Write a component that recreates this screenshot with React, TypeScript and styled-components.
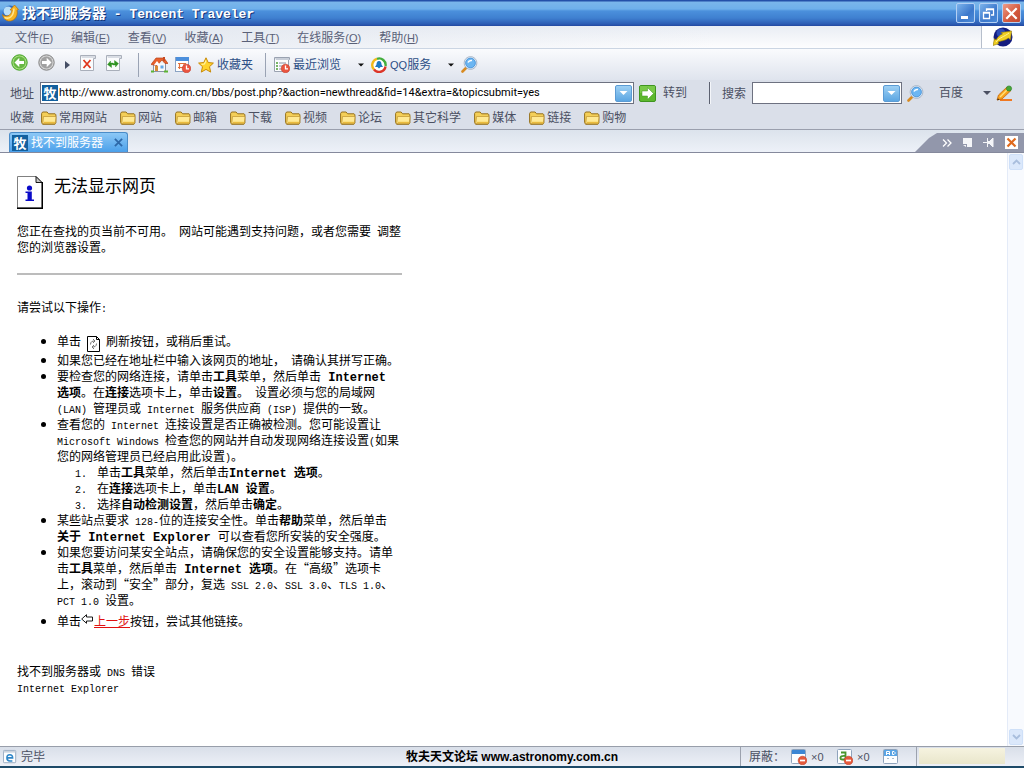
import React from "react";
import styled, { createGlobalStyle, css } from "styled-components";

const CJK = `"Noto Sans CJK SC"`;
const UI_FONT = `"Liberation Sans", ${CJK}, sans-serif`;
const DOC_FONT = `${CJK}, "Liberation Mono", sans-serif`;

const GlobalStyle = createGlobalStyle`
  *, *::before, *::after { box-sizing: border-box; }
  body { margin: 0; background: #fff; font-family: ${UI_FONT}; font-size: 12px; line-height: 16px; color: #4b5062; }
  button, input { font: inherit; color: inherit; }
  button { border: 0; padding: 0; background: none; white-space: nowrap; }
  svg { display: block; flex: none; }
`;

const Window = styled.div`
  min-height: 100vh;
  display: flex;
  flex-direction: column;
`;

const Small = styled.span`
  font-size: 11px;
  line-height: 12px;
`;

/* ---------- title bar ---------- */
const TitleBar = styled.header`
  display: flex;
  align-items: center;
  gap: 3px;
  height: 26px;
  padding: 0 3px 0 2px;
  background: linear-gradient(#2450a8 0, #2450a8 1px, #7ab6ea 2px, #6fb0ea 9px, #4b90dc 11px, #3f80d0 18px, #2c5cb4 24px, #2348a0 26px);
`;

const Title = styled.h1`
  flex: 1;
  margin: 0;
  color: #fff;
  font: bold 14px/20px ${CJK}, sans-serif;
  text-shadow: 1px 1px 0 #143478;
`;

const TitleLatin = styled.span`
  font: bold 13px/20px "Liberation Mono", monospace;
  white-space: pre;
`;

const WindowButtons = styled.div`
  display: flex;
  gap: 4px;
`;

const WindowButton = styled.button<{ $close?: boolean }>`
  width: 19px;
  height: 20px;
  display: grid;
  place-items: center;
  border: 1px solid #b4d0f4;
  border-radius: 2px;
  background: ${(p) =>
    p.$close ? "linear-gradient(135deg, #ee9c88, #d2573c 60%, #c04a34)" : "linear-gradient(135deg, #7cb4ec, #3c78cc 60%, #4a8ad8)"};
`;

/* ---------- menu ---------- */
const MenuBar = styled.nav`
  display: flex;
  height: 23px;
  border-bottom: 1px solid #cbd5e3;
  background: linear-gradient(90deg, #e3e8f0 0, rgba(255, 255, 255, 0) 70%), linear-gradient(#e9edf4, #fdfdfe);
`;

const MenuItems = styled.div`
  flex: 1;
  display: flex;
  align-items: center;
  gap: 18px;
  padding: 1px 0 0 15px;
`;

const MenuItem = styled.button`
  color: #5a6178;
`;

const Throbber = styled.div`
  width: 43px;
  display: grid;
  place-items: center;
  border-left: 1px solid #b7bfcc;
  background: #fff;
`;

/* ---------- toolbars ---------- */
const ToolBar = styled.div`
  display: flex;
  align-items: center;
  height: 31px;
  padding-left: 11px;
  background: linear-gradient(#fafbfd, #dfe4ee);
`;

const NavGroup = styled.div`
  display: flex;
  align-items: center;
  gap: 10px;
  padding-bottom: 4px;
`;

const ToolGroup = styled.div<{ $gap: number }>`
  display: flex;
  align-items: center;
  gap: ${(p) => p.$gap}px;
`;

const ToolButton = styled.button`
  display: flex;
  align-items: center;
  gap: 3px;
  color: #2d4f86;
`;

const Separator = styled.span<{ $before: number; $after: number }>`
  width: 1px;
  height: 24px;
  margin: 0 ${(p) => p.$after}px 0 ${(p) => p.$before}px;
  background: #9aa3b4;
`;

const AddressBar = styled.form`
  display: flex;
  align-items: center;
  height: 26px;
  padding: 0 11px 0 10px;
  background: #dadfe9;
`;

const BarLabel = styled.label`
  width: 30px;
  padding-top: 1px;
  white-space: nowrap;
`;

const Field = styled.div<{ $width?: number }>`
  ${(p) => (p.$width ? css`width: ${p.$width}px;` : css`flex: 1; min-width: 0;`)}
  display: flex;
  align-items: center;
  height: 22px;
  padding: 0 1px;
  border: 1px solid #6d7180;
  background: #fff;
`;

const FieldInput = styled.input`
  flex: 1;
  min-width: 0;
  padding: 0 0 0 1px;
  border: 0;
  outline: 0;
  background: none;
  color: #000;
  font: 11px/16px Roboto, sans-serif;
`;

const DropButton = styled.button`
  width: 17px;
  height: 17px;
  display: grid;
  place-items: center;
  border: 1px solid #5b9bd4;
  border-radius: 2px;
  background: linear-gradient(#9ed0f4, #5ba6e2);
`;

const GoButton = styled.button`
  display: flex;
  align-items: center;
  gap: 7px;
  margin-left: 5px;
`;

const AddressDivider = styled.span`
  width: 2px;
  height: 22px;
  margin: 0 11px 0 22px;
  border-left: 1px solid #5c6170;
  background: #f4f6fa;
`;

const SearchTools = styled.div`
  display: flex;
  align-items: center;
  margin-left: 5px;
`;

const EngineButton = styled.button`
  display: flex;
  align-items: center;
  gap: 20px;
  margin: 0 5px 0 15px;
`;

const FavoritesBar = styled.nav`
  display: flex;
  align-items: center;
  height: 24px;
  padding: 1px 0 0 10px;
  border-bottom: 1px solid #9a9fad;
  background: #dadfe9;
`;

const FavoriteList = styled.div`
  display: flex;
  gap: 13px;
  margin-left: 7px;
`;

const Favorite = styled.a`
  display: flex;
  align-items: center;
  gap: 2px;
  color: inherit;
  text-decoration: none;
  white-space: nowrap;
`;

/* ---------- tabs ---------- */
const TabBar = styled.div`
  display: flex;
  align-items: flex-end;
  justify-content: space-between;
  height: 23px;
  padding-left: 9px;
  border-bottom: 1px solid #85899c;
  background: linear-gradient(#dce3ec, #edf1f8);
`;

const Tab = styled.div`
  display: flex;
  align-items: center;
  gap: 3px;
  height: 20px;
  width: 119px;
  padding: 0 4px 0 2px;
  border: 1px solid #4a8cc8;
  border-bottom: 0;
  border-radius: 3px 3px 0 0;
  background: linear-gradient(#8cc8f6, #4ba0ea);
  color: #fff;
  white-space: nowrap;
`;

const TabTitle = styled.span`
  flex: 1;
`;

const TabTools = styled.div`
  display: flex;
  align-items: center;
  justify-content: flex-end;
  gap: 11px;
  width: 109px;
  height: 19px;
  padding-right: 6px;
  background: #9297ab;
  clip-path: polygon(0 100%, 14px 5px, 22px 0, 100% 0, 100% 100%);
`;

const SiteIcon = styled.span`
  flex: none;
  width: 16px;
  height: 16px;
  background: #12609f;
  color: #fff;
  font: bold 13px/16px ${CJK}, sans-serif;
  text-align: center;
`;

/* ---------- page ---------- */
const Viewport = styled.main`
  flex: 1;
  display: flex;
  justify-content: space-between;
  background: #fff;
`;

const Doc = styled.article`
  width: 402px;
  padding: 23px 0 40px 17px;
  color: #000;
  font-family: ${DOC_FONT};
  white-space: nowrap;
  text-spacing-trim: space-all;
`;

const DocHead = styled.div`
  display: flex;
  gap: 11px;
  height: 33px;
`;

const DocTitle = styled.h2`
  margin: 0;
  font-size: 17px;
  font-weight: 400;
  line-height: 17px;
`;

const Intro = styled.p`
  margin: 14px 0 0;
  line-height: 15px;
`;

const Rule = styled.hr`
  height: 2px;
  margin: 19px 0 0;
  border: 0;
  background: #bcbcbc;
`;

const Lead = styled.p`
  margin: 24px 0 0;
`;

const Steps = styled.ul`
  margin: 18px 0 0;
  padding: 0 0 0 40px;
`;

const Step = styled.li<{ $top?: number; $bottom?: number }>`
  padding: ${(p) => p.$top || 0}px 0 ${(p) => p.$bottom || 0}px;
`;

const SubSteps = styled.ol`
  margin: 0;
  padding: 0 0 0 40px;
  list-style: none;
  counter-reset: step;
`;

const SubStep = styled.li`
  counter-increment: step;
  &::before {
    content: counter(step) ".";
    display: inline-block;
    width: 22px;
    margin-left: -22px;
    font: 10px/10px "Liberation Mono", monospace;
  }
`;

const Lat = styled.span`
  font: 10px/10px "Liberation Mono", monospace;
  white-space: pre;
`;

const Bold = styled.b`
  font-family: "Liberation Mono", ${CJK}, monospace;
  line-height: 12px;
`;

const InlineIcon = styled.span<{ $align: string }>`
  display: inline-block;
  height: 12px;
  vertical-align: ${(p) => p.$align};
  svg { overflow: visible; }
`;

const BackLink = styled.a`
  color: #e01010;
  text-decoration: underline;
`;

const DocFoot = styled.p`
  margin: 34px 0 0;
`;

const ScrollBar = styled.div`
  width: 17px;
  display: flex;
  flex-direction: column;
  justify-content: space-between;
  padding: 1px;
  border-left: 1px solid #e4ebf8;
  background: #f8fafe;
`;

const ScrollButton = styled.button`
  width: 14px;
  height: 16px;
  display: grid;
  place-items: center;
  border: 1px solid #cfe0f8;
  border-radius: 2px;
  background: #dbe8fb;
`;

/* ---------- status bar ---------- */
const StatusBar = styled.footer`
  display: grid;
  grid-template-columns: 1fr auto 1fr;
  align-items: center;
  height: 22px;
  border-top: 1px solid #989eaa;
  border-bottom: 2px solid #1d4a68;
  background: linear-gradient(#d9dfe9, #edf0f7);
`;

const StatusText = styled.div`
  display: flex;
  align-items: center;
  gap: 4px;
  padding: 1px 0 0 3px;
`;

const SiteName = styled.strong`
  color: #000;
`;

const StatusRight = styled.div`
  justify-self: end;
  display: flex;
  align-items: center;
  width: 284px;
  height: 19px;
  padding-left: 8px;
  border-left: 1px solid #9ca2ae;
`;

const Blocked = styled.span<{ $width: number }>`
  display: flex;
  align-items: center;
  gap: 4px;
  width: ${(p) => p.$width}px;
`;

const BlockLabel = styled.span`
  width: 42px;
  padding-top: 1px;
  white-space: nowrap;
`;

const ZoneBox = styled.div`
  height: 19px;
  padding: 1px 0 1px 2px;
  border-left: 1px solid #9ca2ae;
  &::after {
    content: "";
    display: block;
    width: 86px;
    height: 16px;
    background: linear-gradient(#f6f3e0, #e9e6cb);
  }
`;

/* ---------- icons ---------- */
const Caret = ({ color = "#111", w = 7 }: { color?: string; w?: number }) => (
  <svg width={w} height="4" viewBox="0 0 8 4"><path d="M0 0h8L4 4z" fill={color} /></svg>
);

const LogoIcon = () => (
  <svg width="17" height="18" viewBox="0 0 17 18">
    <circle cx="8" cy="9" r="7.500" fill="#2f6fc8" />
    <circle cx="6" cy="7" r="4.500" fill="#b8def8" />
    <path d="M.500 10.500c3 3 8.500 2 9.500-4.500L8 6l4.500-5L16.500 5.500 15 6c1.500 8-4 11.500-8.500 11C3.500 16.500 1 14 .500 10.500z" fill="#f7b423" stroke="#b8700c" strokeWidth=".7" />
    <path d="M2.500 13.500c5 2 9-1 9.500-9" fill="none" stroke="#ffe690" strokeWidth="1.500" />
  </svg>
);

const ThrobberIcon = () => (
  <svg width="20" height="20" viewBox="0 0 20 20">
    <circle cx="10" cy="10" r="9.500" fill="#141c80" />
    <circle cx="8" cy="6" r="4.500" fill="#3c6ad8" opacity=".6" />
    <path d="M0 18.500l1.500-7 1.500 1.500C5 9.500 7 8 9.500 7L8 5.500 18.500 4 17.500 13l-2-2C12 14 7 14 5 15l1 1.500z" fill="#f0cf22" stroke="#8d7404" strokeWidth=".6" />
    <path d="M3 15c4-5 8-5 13-9" stroke="#fdf0a0" fill="none" />
  </svg>
);

const ArrowDisc = ({ right, light, dark }: { right?: boolean; light: string; dark: string }) => (
  <svg width="17" height="17" viewBox="0 0 17 17">
    <circle cx="8.500" cy="8.500" r="7.700" fill={light} stroke={dark} />
    <circle cx="8.500" cy="8.500" r="6" fill={dark} opacity=".6" />
    <path d={right ? "M13.500 8.500L8.700 3.700v3.300H4v3h4.700v3.300z" : "M3.500 8.500l4.800-4.800v3.300H13v3H8.300v3.300z"} fill="#fff" />
  </svg>
);

const SheetIcon = ({ kind }: { kind: "stop" | "refresh" }) => (
  <svg width="16" height="16" viewBox="0 0 16 16">
    <path d="M.500 .500h15v3h-2v12H.500z" fill="#fbfcfd" stroke="#a9afba" />
    <path d="M1 1h14v2H2" fill="#d9dde4" />
    {kind === "stop" ? (
      <path d="M3.500 5l7 8M10.500 5l-7 8" stroke="#e0371e" strokeWidth="1.800" />
    ) : (
      <path d="M1.500 9.500L4.500 6v2H7v1.500H5.500v3zM12.500 8.500L9.500 12v-2H7V8.500h1.500v-3z" fill="#2f9322" stroke="#2f9322" strokeWidth=".4" />
    )}
  </svg>
);

const HomeIcon = () => (
  <svg width="17" height="17" viewBox="0 0 17 17">
    <path d="M2.500 8v7.500h12V7" fill="#f8fafc" stroke="#8a93a5" />
    <path d="M0 8.500L5 2h8l4 5.500h-3L11 4 6 9.500z" fill="#e8602c" stroke="#b8431a" strokeWidth=".7" />
    <path d="M3 9l3-4 3 4z" fill="#fff" />
    <rect x="12" y="1" width="2" height="4" fill="#c84a20" />
    <rect x="4" y="10" width="3" height="5" fill="#d98a34" />
    <rect x="9.500" y="9.500" width="3" height="3" fill="#63a8e8" />
    <path d="M0 15.500h3M13 15.500h4" stroke="#5cb432" strokeWidth="2" />
  </svg>
);

const MiniClock = () => (
  <g>
    <circle cx="11.500" cy="11.500" r="4.300" fill="#ea5540" stroke="#c23a28" strokeWidth=".6" />
    <path d="M11.500 8.500v3.300h2.500" fill="none" stroke="#fff" strokeWidth="1.300" />
  </g>
);

const CalendarIcon = () => (
  <svg width="16" height="16" viewBox="0 0 16 16">
    <rect x=".5" y=".5" width="13" height="14" fill="#fff" stroke="#8ba3c4" />
    <rect x="1" y="0" width="13" height="4" fill="#4c8fdc" />
    <path d="M3 6.500h8M3 10.500h8M4.500 6v6M9 6v5" stroke="#e0703c" strokeWidth="1.200" />
    <MiniClock />
  </svg>
);

const HistoryIcon = () => (
  <svg width="16" height="16" viewBox="0 0 16 16">
    <path d="M.500 .500h15v2h-1v12H.500z" fill="#fbfcfd" stroke="#9aa2b0" />
    <path d="M1 1h14v2H2" fill="#c8ced8" />
    <path d="M2 6h2M2 9h2M2 12h2" stroke="#4f9e34" strokeWidth="1.500" />
    <path d="M5 6h7M5 9h6M5 12h5" stroke="#8a93a5" />
    <MiniClock />
  </svg>
);

const StarIcon = () => (
  <svg width="16" height="16" viewBox="0 0 16 16">
    <path d="M8 .8l2.200 4.700 5.200.6-3.900 3.600 1.200 5.400L8 12.400l-4.700 2.700 1.200-5.400L.6 6.100l5.200-.6z" fill="#ffd32c" stroke="#c98a08" />
    <path d="M8 3.500L6.500 7 3.500 7.300" fill="none" stroke="#fff3a8" strokeWidth="1.200" />
  </svg>
);

const QQIcon = () => (
  <svg width="16" height="16" viewBox="0 0 16 16" fill="none">
    <circle cx="8" cy="8" r="6" fill="#fff" />
    <path d="M3 12.500A6.500 6.500 0 0 1 6 1.800" stroke="#f3b91a" strokeWidth="2.400" />
    <path d="M6 1.800A6.500 6.500 0 0 1 14.500 9" stroke="#43ae3c" strokeWidth="2.400" />
    <path d="M14.500 9.500A6.500 6.500 0 0 1 3 12.500" stroke="#dc3528" strokeWidth="2.400" />
    <path d="M8 4c2 0 2.500 2 2.500 3.500L12 10H9.500L8 11.500 6.500 10H4l1.500-2.500C5.500 6 6 4 8 4z" fill="#1d78c4" />
  </svg>
);

const Magnifier = () => (
  <svg width="17" height="17" viewBox="0 0 17 17">
    <path d="M1.500 15.500l4-4" stroke="#d88b22" strokeWidth="2.600" strokeLinecap="round" />
    <circle cx="9.500" cy="7" r="6.400" fill="#e4eef8" stroke="#9aa9bd" strokeWidth=".8" />
    <circle cx="9.500" cy="7" r="4.900" fill="#6cb6f2" stroke="#3f8cd4" strokeWidth=".8" />
    <path d="M7 6.500Q8 4 11 4.500" fill="none" stroke="#fff" strokeWidth="1.500" />
  </svg>
);

const GoIcon = () => (
  <svg width="17" height="17" viewBox="0 0 17 17">
    <rect x=".5" y=".5" width="16" height="16" rx="1.500" fill="#5cb82e" stroke="#3f9420" />
    <path d="M1 1h15v7H1z" fill="#8ad458" opacity=".6" />
    <path d="M14.500 8.500L8.500 2.500v3.500H3v5h5.500v3.500z" fill="#fff" stroke="#3f9420" strokeWidth=".5" />
  </svg>
);

const PencilIcon = () => (
  <svg width="17" height="17" viewBox="0 0 17 17">
    <path d="M4 15h12" stroke="#f07820" strokeWidth="2" />
    <path d="M1 15l1.500-5L11 2l4 3.500L6 14z" fill="#f9a11c" stroke="#c46a0c" strokeWidth=".8" />
    <path d="M4 12l8-8" stroke="#ffe27a" strokeWidth="1.500" />
    <circle cx="13" cy="3.500" r="2.600" fill="#46a838" stroke="#2a7a22" strokeWidth=".6" />
    <path d="M1 15.300l1-2 1.500 1.500z" fill="#4a3010" />
  </svg>
);

const FolderIcon = () => (
  <svg width="16" height="14" viewBox="0 0 16 14">
    <path d="M.6 11.500V2.500l1-1.500h4.500l1.500 1.800h6.500l.8 1v8l-1 1.500H1.600z" fill="#f4cf58" stroke="#94701e" />
    <path d="M2.500 5.500h12.500l-.7 7H1.800z" fill="#ffe993" stroke="#bf9430" strokeWidth=".7" />
    <path d="M3 11.500h11" stroke="#e9bb3e" strokeWidth="1.400" />
  </svg>
);

const InfoPage = () => (
  <svg width="26" height="33" viewBox="0 0 26 33">
    <path d="M.5 32V.5H19l6 6V32z" fill="#fff" stroke="#808080" />
    <path d="M0 32.300h25.300V6" fill="none" stroke="#000" strokeWidth="1.400" />
    <path d="M19 .5v6h6z" fill="#c8c8c8" stroke="#000" strokeWidth=".9" />
    <circle cx="12.500" cy="12" r="2.600" fill="#0a0ac8" />
    <path d="M8.500 15.500h6.300v8H17V25H8.500v-1.500h2V17h-2z" fill="#0a0ac8" />
  </svg>
);

const RefreshPage = () => (
  <svg width="13" height="16" viewBox="0 0 13 16">
    <path d="M.5.500h9l3 3v12H.5z" fill="#fff" stroke="#000" />
    <path d="M9.500.500v3h3" fill="none" stroke="#000" />
    <path d="M3.500 8.500c0-3 2-3.500 4-3.500M6 3l2 2-2 2M9.500 7.500c0 3-2 3.500-4 3.500M7 9l-2 2 2 2" fill="none" stroke="#777" />
  </svg>
);

const BackOutline = () => (
  <svg width="13" height="11" viewBox="0 0 13 11">
    <path d="M.7 5L5.500 .7V3h6v4h-6v2.300z" fill="#fff" stroke="#000" strokeWidth=".9" />
  </svg>
);

const Minus = () => (
  <g>
    <circle cx="11.500" cy="11.500" r="4.300" fill="#e55a3c" stroke="#c23a20" strokeWidth=".6" />
    <path d="M9 11.500h5" stroke="#fff" strokeWidth="1.700" />
  </g>
);

const StatusIcon = ({ kind }: { kind: "popup" | "float" | "ad" | "page" }) => (
  <svg width={kind === "page" ? 14 : 16} height="16" viewBox="0 0 16 16">
    <rect x=".5" y=".5" width="14" height="14" rx="1" fill="#fdfeff" stroke="#8fa3bc" />
    {kind === "popup" && <><path d="M1 1h13v4H1z" fill="#3c86d4" /><Minus /></>}
    {kind === "float" && (
      <><path d="M4 3.500h4.500v7H5.500q-2.500 0-2-2t5-1.500" fill="none" stroke="#4a962c" strokeWidth="1.800" /><Minus /></>
    )}
    {kind === "ad" && (
      <>
        <path d="M1 1h13v6H1z" fill="#5aa4e4" />
        <path d="M3.500 6V2.500h3V6M3.500 4.500h3M9.500 2.500v3H11l1-1v-1l-1-1z" fill="none" stroke="#fff" />
        <path d="M5 9v1M10 9v1" stroke="#5a7894" />
      </>
    )}
    {kind === "page" && (
      <><path d="M1 1h13v2H1z" fill="#ccd3dd" /><path d="M4.500 9h6.500q0-3.500-3.300-3.500T4.500 9t3.200 3.500h3" fill="none" stroke="#2f86c8" strokeWidth="1.800" /></>
    )}
  </svg>
);

const Cross = ({ size, color, w }: { size: number; color: string; w: number }) => (
  <svg width={size} height={size} viewBox="0 0 10 10"><path d="M1 1l8 8M9 1L1 9" stroke={color} strokeWidth={w} /></svg>
);

const Chevron = ({ down }: { down?: boolean }) => (
  <svg width="9" height="6" viewBox="0 0 9 6"><path d={down ? "M1 1l3.500 3.500L8 1" : "M1 5l3.500-3.500L8 5"} fill="none" stroke="#a9bedd" strokeWidth="1.800" /></svg>
);

const DropArrow = () => <DropButton type="button" aria-label="展开"><Caret color="#fff" w={9} /></DropButton>;

const menus: [string, string][] = [
  ["文件", "F"], ["编辑", "E"], ["查看", "V"], ["收藏", "A"], ["工具", "T"], ["在线服务", "O"], ["帮助", "H"],
];
const favorites = ["常用网站", "网站", "邮箱", "下载", "视频", "论坛", "其它科学", "媒体", "链接", "购物"];

export default function App() {
  return (
    <Window>
      <GlobalStyle />
      <TitleBar>
        <LogoIcon />
        <Title>找不到服务器<TitleLatin> - Tencent Traveler</TitleLatin></Title>
        <WindowButtons>
          <WindowButton aria-label="最小化">
            <svg width="13" height="13" viewBox="0 0 13 13"><path d="M2 9h7v3H2z" fill="#fff" /></svg>
          </WindowButton>
          <WindowButton aria-label="还原">
            <svg width="13" height="13" viewBox="0 0 13 13"><path d="M4.500 4V2h7v6H9M4 2.500h8M1.500 5.500h6v6h-6zM1 6h7" fill="none" stroke="#fff" strokeWidth="1.300" /></svg>
          </WindowButton>
          <WindowButton $close aria-label="关闭"><Cross size={13} color="#fff" w={1.700} /></WindowButton>
        </WindowButtons>
      </TitleBar>

      <MenuBar>
        <MenuItems>
          {menus.map(([name, key]) => (
            <MenuItem key={key}>{name}<Small>(<u>{key}</u>)</Small></MenuItem>
          ))}
        </MenuItems>
        <Throbber><ThrobberIcon /></Throbber>
      </MenuBar>

      <ToolBar>
        <NavGroup>
          <ToolButton aria-label="后退"><ArrowDisc light="#a5dc7c" dark="#3c9e1e" /></ToolButton>
          <ToolButton aria-label="前进"><ArrowDisc right light="#d2d2d2" dark="#808080" /></ToolButton>
          <ToolButton aria-label="历史">
            <svg width="5" height="17" viewBox="0 0 5 17"><path d="M0 7l5 4-5 4z" fill="#454e64" /></svg>
          </ToolButton>
          <ToolButton aria-label="停止"><SheetIcon kind="stop" /></ToolButton>
          <ToolButton aria-label="刷新"><SheetIcon kind="refresh" /></ToolButton>
        </NavGroup>
        <Separator $before={16} $after={12} />
        <ToolGroup $gap={7}>
          <ToolButton aria-label="主页"><HomeIcon /></ToolButton>
          <ToolButton aria-label="日历"><CalendarIcon /></ToolButton>
          <ToolButton><StarIcon />收藏夹</ToolButton>
        </ToolGroup>
        <Separator $before={12} $after={8} />
        <ToolGroup $gap={17}>
          <ToolButton><HistoryIcon />最近浏览</ToolButton>
          <ToolGroup $gap={7}>
            <Caret w={6} />
            <ToolButton><QQIcon /><span><Small>QQ</Small>服务</span></ToolButton>
          </ToolGroup>
          <ToolGroup $gap={7}>
            <Caret w={6} />
            <ToolButton aria-label="查找"><Magnifier /></ToolButton>
          </ToolGroup>
        </ToolGroup>
      </ToolBar>

      <AddressBar onSubmit={(e) => e.preventDefault()}>
        <BarLabel htmlFor="address">地址</BarLabel>
        <Field>
          <SiteIcon>牧</SiteIcon>
          <FieldInput
            id="address"
            defaultValue="http://www.astronomy.com.cn/bbs/post.php?&action=newthread&fid=14&extra=&topicsubmit=yes"
          />
          <DropArrow />
        </Field>
        <GoButton><GoIcon />转到</GoButton>
        <AddressDivider />
        <BarLabel htmlFor="search">搜索</BarLabel>
        <Field $width={150}>
          <FieldInput id="search" />
          <DropArrow />
        </Field>
        <SearchTools>
          <Magnifier />
          <EngineButton type="button">百度<Caret color="#4b5062" w={8} /></EngineButton>
          <PencilIcon />
        </SearchTools>
      </AddressBar>

      <FavoritesBar>
        收藏
        <FavoriteList>
          {favorites.map((f) => (
            <Favorite key={f} href="#"><FolderIcon />{f}</Favorite>
          ))}
        </FavoriteList>
      </FavoritesBar>

      <TabBar>
        <Tab>
          <SiteIcon>牧</SiteIcon>
          <TabTitle>找不到服务器</TabTitle>
          <button aria-label="关闭标签"><Cross size={9} color="#2d68a8" w={2} /></button>
        </Tab>
        <TabTools>
          <svg width="10" height="8" viewBox="0 0 10 8"><path d="M1 .5L4.500 4 1 7.500M5.500.500L9 4 5.500 7.500" fill="none" stroke="#fff" strokeWidth="1.300" /></svg>
          <svg width="9" height="9" viewBox="0 0 9 9"><path d="M0 0h9v9H4V6H0z" fill="#f4f5f8" /><path d="M0 7h3v2z" fill="#f4f5f8" /></svg>
          <svg width="11" height="9" viewBox="0 0 11 9"><path d="M0 4.500h4M4.500 0v9M10 0L7 3v3l3 3z" fill="#f4f5f8" stroke="#f4f5f8" /><path d="M5 3h3v3H5z" fill="#f4f5f8" /></svg>
          <svg width="13" height="13" viewBox="0 0 13 13"><rect width="13" height="13" fill="#fff" /><path d="M2.500 2.500l8 8M10.500 2.500l-8 8" stroke="#e06a1c" strokeWidth="2.200" /></svg>
        </TabTools>
      </TabBar>

      <Viewport>
        <Doc>
          <DocHead>
            <InfoPage />
            <DocTitle>无法显示网页</DocTitle>
          </DocHead>
          <Intro>
            您正在查找的页当前不可用。<Lat> </Lat>网站可能遇到支持问题，或者您需要<Lat> </Lat>调整<br />
            您的浏览器设置。
          </Intro>
          <Rule />
          <Lead>请尝试以下操作<Lat>:</Lat></Lead>
          <Steps>
            <Step $bottom={3}>
              单击<Lat> </Lat><InlineIcon $align="-2px"><RefreshPage /></InlineIcon><Lat> </Lat>刷新按钮，或稍后重试。
            </Step>
            <Step>如果您已经在地址栏中输入该网页的地址，<Lat> </Lat>请确认其拼写正确。</Step>
            <Step>
              要检查您的网络连接，请单击<Bold>工具</Bold>菜单，然后单击<Bold> Internet</Bold><br />
              <Bold>选项</Bold>。在<Bold>连接</Bold>选项卡上，单击<Bold>设置</Bold>。<Lat> </Lat>设置必须与您的局域网<br />
              <Lat>(LAN) </Lat>管理员或<Lat> Internet </Lat>服务供应商<Lat> (ISP) </Lat>提供的一致。
            </Step>
            <Step>
              查看您的<Lat> Internet </Lat>连接设置是否正确被检测。您可能设置让<br />
              <Lat>Microsoft Windows </Lat>检查您的网站并自动发现网络连接设置<Lat>(</Lat>如果<br />
              您的网络管理员已经启用此设置<Lat>)</Lat>。
              <SubSteps>
                <SubStep>单击<Bold>工具</Bold>菜单，然后单击<Bold>Internet 选项</Bold>。</SubStep>
                <SubStep>在<Bold>连接</Bold>选项卡上，单击<Bold>LAN 设置</Bold>。</SubStep>
                <SubStep>选择<Bold>自动检测设置</Bold>，然后单击<Bold>确定</Bold>。</SubStep>
              </SubSteps>
            </Step>
            <Step>
              某些站点要求<Lat> 128-</Lat>位的连接安全性。单击<Bold>帮助</Bold>菜单，然后单击<br />
              <Bold>关于 Internet Explorer </Bold>可以查看您所安装的安全强度。
            </Step>
            <Step>
              如果您要访问某安全站点，请确保您的安全设置能够支持。请单<br />
              击<Bold>工具</Bold>菜单，然后单击<Bold> Internet 选项</Bold>。在“高级”选项卡<br />
              上，滚动到“安全”部分，复选<Lat> SSL 2.0</Lat>、<Lat>SSL 3.0</Lat>、<Lat>TLS 1.0</Lat>、<br />
              <Lat>PCT 1.0 </Lat>设置。
            </Step>
            <Step $top={5}>
              单击<InlineIcon $align="0px"><BackOutline /></InlineIcon><BackLink href="#">上一步</BackLink>按钮，尝试其他链接。
            </Step>
          </Steps>
          <DocFoot>
            找不到服务器或<Lat> DNS </Lat>错误<br />
            <Lat>Internet Explorer</Lat>
          </DocFoot>
        </Doc>
        <ScrollBar>
          <ScrollButton aria-label="向上"><Chevron /></ScrollButton>
          <ScrollButton aria-label="向下"><Chevron down /></ScrollButton>
        </ScrollBar>
      </Viewport>

      <StatusBar>
        <StatusText><StatusIcon kind="page" />完毕</StatusText>
        <SiteName>牧夫天文论坛 www.astronomy.com.cn</SiteName>
        <StatusRight>
          <BlockLabel>屏蔽：</BlockLabel>
          <Blocked $width={46}><StatusIcon kind="popup" /><Small>×0</Small></Blocked>
          <Blocked $width={46}><StatusIcon kind="float" /><Small>×0</Small></Blocked>
          <Blocked $width={33}><StatusIcon kind="ad" /></Blocked>
          <ZoneBox />
        </StatusRight>
      </StatusBar>
    </Window>
  );
}
